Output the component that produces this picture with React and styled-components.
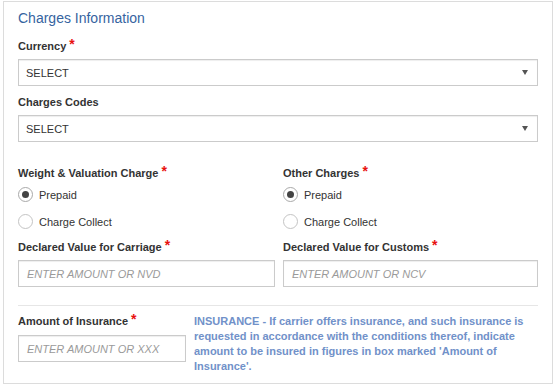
import styled, { createGlobalStyle } from "styled-components";

const GlobalStyle = createGlobalStyle`
  body {
    margin: 0;
    background: #fff;
    font-family: "Liberation Sans", Arial, sans-serif;
    color: #333;
  }
`;

const Panel = styled.div`
  width: 550px;
  box-sizing: border-box;
  margin: 1px 0 0 3px;
  border: 1px solid #dcdcdc;
  padding: 8px 14px 9px 14px;
`;

const Title = styled.div`
  font-size: 14px;
  line-height: 16px;
  color: #36649f;
  margin-bottom: 13px;
`;

const Field = styled.div`
  margin-bottom: ${(props) => props.mb || 0}px;
`;

const Label = styled.div`
  font-size: 11px;
  font-weight: bold;
  line-height: 15px;
  margin-top: ${(props) => props.mt || 0}px;
  margin-bottom: ${(props) => (props.mb !== undefined ? props.mb : 5)}px;
  white-space: nowrap;
`;

const Req = styled.span`
  color: #e8110f;
  font-size: 14px;
  line-height: 0;
  margin-left: 3px;
  position: relative;
  top: -1px;
`;

const Select = styled.div`
  height: 27px;
  box-sizing: border-box;
  border: 1px solid #cbcbcb;
  box-shadow: inset 0 1px 1px rgba(0, 0, 0, 0.07);
  padding: 0 7px 0 7px;
  display: flex;
  align-items: center;
  justify-content: space-between;
  font-size: 11px;
  color: #333;
`;

const Caret = styled.span`
  width: 0;
  height: 0;
  border-left: 3px solid transparent;
  border-right: 3px solid transparent;
  border-top: 5px solid #555;
  margin-right: 2px;
`;

const Columns = styled.div`
  display: grid;
  grid-template-columns: 257px 255px;
  column-gap: 8px;
`;

const RadioRow = styled.label`
  height: 27px;
  display: flex;
  align-items: center;
  gap: 6px;
  font-size: 11px;
  color: #333;
`;

const RadioCircle = styled.span`
  width: 15px;
  height: 15px;
  box-sizing: border-box;
  border-radius: 50%;
  border: 1px solid ${(props) => (props.checked ? "#a9a9a9" : "#c4c4c4")};
  background: #fff;
  display: flex;
  align-items: center;
  justify-content: center;
  &::after {
    content: "";
    width: 7px;
    height: 7px;
    border-radius: 50%;
    background: ${(props) => (props.checked ? "#444" : "transparent")};
  }
`;

const Input = styled.div`
  height: 27px;
  box-sizing: border-box;
  border: 1px solid #cbcbcb;
  box-shadow: inset 0 1px 1px rgba(0, 0, 0, 0.07);
  padding: 0 8px;
  display: flex;
  align-items: center;
  font-size: 11px;
  font-style: italic;
  color: #9a9a9a;
  white-space: nowrap;
`;

const Divider = styled.div`
  height: 1px;
  background: #e6e6e6;
  margin: 18px 0 8px;
`;

const BottomRow = styled.div`
  display: grid;
  grid-template-columns: 168px 1fr;
  column-gap: 8px;
`;

const Note = styled.div`
  font-size: 11px;
  font-weight: bold;
  line-height: 15px;
  color: #7191c9;
`;

function RadioGroup({ title }) {
  return (
    <div>
      <Label mb={0}>
        {title}
        <Req>*</Req>
      </Label>
      <RadioRow>
        <RadioCircle checked />
        Prepaid
      </RadioRow>
      <RadioRow>
        <RadioCircle />
        Charge Collect
      </RadioRow>
    </div>
  );
}

export default function App() {
  return (
    <>
      <GlobalStyle />
      <Panel>
        <Title>Charges Information</Title>
        <Field mb={9}>
          <Label>
            Currency<Req>*</Req>
          </Label>
          <Select>
            SELECT
            <Caret />
          </Select>
        </Field>
        <Field mb={24}>
          <Label>Charges Codes</Label>
          <Select>
            SELECT
            <Caret />
          </Select>
        </Field>
        <Columns>
          <div>
            <RadioGroup title="Weight & Valuation Charge" />
            <Label mt={5}>
              Declared Value for Carriage<Req>*</Req>
            </Label>
            <Input>ENTER AMOUNT OR NVD</Input>
          </div>
          <div>
            <RadioGroup title="Other Charges" />
            <Label mt={5}>
              Declared Value for Customs<Req>*</Req>
            </Label>
            <Input>ENTER AMOUNT OR NCV</Input>
          </div>
        </Columns>
        <Divider />
        <BottomRow>
          <div>
            <Label mb={6}>
              Amount of Insurance<Req>*</Req>
            </Label>
            <Input>ENTER AMOUNT OR XXX</Input>
          </div>
          <Note>
            INSURANCE - If carrier offers insurance, and such insurance is
            requested in accordance with the conditions thereof, indicate
            amount to be insured in figures in box marked 'Amount of
            Insurance'.
          </Note>
        </BottomRow>
      </Panel>
    </>
  );
}
